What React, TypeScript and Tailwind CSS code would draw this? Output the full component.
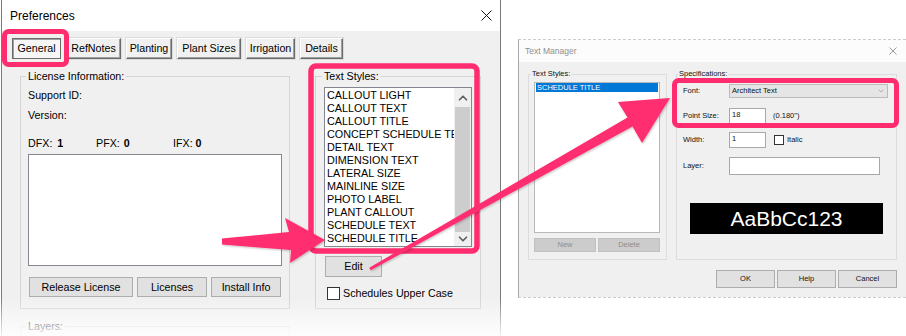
import React from 'react';
import { ChevronDown, ChevronUp } from 'lucide-react';

const textStyles = [
  'CALLOUT LIGHT',
  'CALLOUT TEXT',
  'CALLOUT TITLE',
  'CONCEPT SCHEDULE TEXT',
  'DETAIL TEXT',
  'DIMENSION TEXT',
  'LATERAL SIZE',
  'MAINLINE SIZE',
  'PHOTO LABEL',
  'PLANT CALLOUT',
  'SCHEDULE TEXT',
  'SCHEDULE TITLE',
];

const tabs = [
  { label: 'General', width: 'w-[49px]', active: true },
  { label: 'RefNotes', width: 'w-[55px]', active: false },
  { label: 'Planting', width: 'w-[46px]', active: false },
  { label: 'Plant Sizes', width: 'w-[64px]', active: false },
  { label: 'Irrigation', width: 'w-[49px]', active: false },
  { label: 'Details', width: 'w-[43px]', active: false },
];

const PINK = '#ff2d6f';

function CloseIcon({ size, color }: { size: number; color: string }) {
  return (
    <svg width={size} height={size} viewBox={`0 0 ${size} ${size}`}>
      <path
        d={`M0.5 0.5L${size - 0.5} ${size - 0.5}M${size - 0.5} 0.5L0.5 ${size - 0.5}`}
        stroke={color}
        strokeWidth={1}
      />
    </svg>
  );
}

function Preferences() {
  return (
    <div className="ml-px flex h-[336px] w-[500px] shrink-0 flex-col border-x border-[#7a7a7a] bg-[#f0f0f0] text-[10.7px] text-black">
      <div className="flex h-[31px] shrink-0 items-center justify-between bg-white px-[8px]">
        <span className="text-[12px]">Preferences</span>
        <CloseIcon size={11} color="#111" />
      </div>

      {/* tab buttons */}
      <div className="mt-[7px] flex gap-[5px] pl-[10px]">
        {tabs.map((tab) => (
          <div
            key={tab.label}
            className={
              tab.active
                ? `${tab.width} flex h-[21px] items-center justify-center border border-[#6a6a6a] bg-[#f6f6f6] shadow-[inset_1px_1px_0_#a0a0a0]`
                : `${tab.width} flex h-[21px] items-center justify-center border border-b-[#6a6a6a] border-l-white border-r-[#6a6a6a] border-t-white bg-[#f0f0f0] shadow-[inset_-1px_-1px_0_#a0a0a0,0_0_0_1px_#dcdcdc]`
            }
          >
            {tab.label}
          </div>
        ))}
      </div>

      <div className="mt-[17px] flex items-start">
        <div className="ml-[18px] flex flex-col">
          {/* License Information */}
          <div className="flex w-[270px] flex-col border border-[#d5d5d5]">
            <div className="-mt-[8px] ml-[5px] w-fit bg-[#f0f0f0] px-[2px] leading-[14px]">License Information:</div>
            <div className="ml-[7px] mt-[5px] leading-[14px]">Support ID:</div>
            <div className="ml-[7px] mt-[6px] leading-[14px]">Version:</div>
            <div className="ml-[7px] mt-[14px] flex leading-[14px]">
              <span className="flex w-[68px] gap-[5px]">
                DFX:<b>1</b>
              </span>
              <span className="flex w-[77px] gap-[4px]">
                PFX:<b>0</b>
              </span>
              <span className="flex gap-[3px]">
                IFX:<b>0</b>
              </span>
            </div>
            <div className="ml-[7px] mt-[4px] h-[112px] w-[254px] border border-[#828790] bg-white" />
            <div className="mb-[11px] ml-[8px] mt-[11px] flex gap-[4px]">
              <button type="button" className="h-[20px] w-[104px] border border-[#adadad] bg-[#e1e1e1]">
                Release License
              </button>
              <button type="button" className="h-[20px] w-[70px] border border-[#adadad] bg-[#e1e1e1]">
                Licenses
              </button>
              <button type="button" className="h-[20px] w-[70px] border border-[#adadad] bg-[#e1e1e1]">
                Install Info
              </button>
            </div>
          </div>

          {/* Layers (cut off) */}
          <div className="mt-[17px] h-[40px] w-[270px] border border-[#d5d5d5]">
            <div className="-mt-[8px] ml-[5px] w-fit bg-[#f0f0f0] px-[2px] leading-[14px]">Layers:</div>
          </div>
        </div>

        {/* Text Styles */}
        <div className="ml-[25px] flex w-[166px] flex-col border border-[#d5d5d5]">
          <div className="-mt-[8px] ml-[6px] w-fit bg-[#f0f0f0] px-[2px] leading-[14px]">Text Styles:</div>
          <div className="ml-[8px] mt-[4px] flex h-[160px] w-[148px] border border-[#828790] bg-white">
            <div className="min-w-0 flex-1 overflow-hidden pl-[2px] pt-[1px] text-[10.8px]">
              {textStyles.map((name) => (
                <div key={name} className="h-[13px] whitespace-nowrap leading-[13px]">
                  {name}
                </div>
              ))}
            </div>
            <div className="flex w-[17px] flex-col bg-[#f0f0f0]">
              <div className="flex h-[19px] items-center justify-center text-[#606060]">
                <ChevronUp size={14} strokeWidth={3} />
              </div>
              <div className="mx-px flex-1 bg-[#cdcdcd]" />
              <div className="flex h-[14px] items-center justify-center text-[#606060]">
                <ChevronDown size={14} strokeWidth={3} />
              </div>
            </div>
          </div>
          <button type="button" className="ml-[9px] mt-[9px] h-[21px] w-[57px] border border-[#adadad] bg-[#e1e1e1]">
            Edit
          </button>
          <div className="mb-[8px] ml-[11px] mt-[10px] flex items-center gap-[3px] leading-[13px]">
            <span className="h-[13px] w-[13px] border border-[#333] bg-white" />
            <span>Schedules Upper Case</span>
          </div>
        </div>
      </div>
    </div>
  );
}

function TextManager() {
  return (
    <div className="ml-[17px] mt-[39px] flex h-[259px] w-[388px] shrink-0 flex-col border-y border-l border-dashed border-[#cccccc] border-l-[#a8a8a8] text-[7.5px] text-[#111] [border-left-style:solid]">
      <div className="flex h-[22px] shrink-0 items-center justify-between bg-[#fcfcfc] pl-[6px] pr-[9px]">
        <span className="text-[8.5px] text-[#8f8f8f]">Text Manager</span>
        <CloseIcon size={8} color="#9a9a9a" />
      </div>

      <div className="flex flex-1 flex-col bg-[#f0f0f0]">
        <div className="ml-[9px] mt-[12px] flex gap-[9px]">
          {/* Text Styles */}
          <div className="flex h-[186px] w-[139px] flex-col border border-[#dcdcdc]">
            <div className="-mt-[6px] ml-[2px] w-fit bg-[#f0f0f0] px-px leading-[10px]">Text Styles:</div>
            <div className="ml-[5px] mt-[3px] h-[151px] w-[126px] border border-[#b8b8b8] bg-white px-px">
              <div className="h-[9px] bg-[#0078d7] pl-[1px] leading-[9px] text-white">SCHEDULE TITLE</div>
            </div>
            <div className="ml-[5px] mt-[5px] flex gap-[2px]">
              <div className="flex h-[14px] w-[62px] items-center justify-center border border-[#c0c0c0] bg-[#cccccc] text-[#8c8c8c]">
                New
              </div>
              <div className="flex h-[14px] w-[62px] items-center justify-center border border-[#c0c0c0] bg-[#cccccc] text-[#8c8c8c]">
                Delete
              </div>
            </div>
          </div>

          {/* Specifications */}
          <div className="flex h-[186px] w-[221px] flex-col border border-[#dcdcdc]">
            <div className="-mt-[6px] ml-px w-fit bg-[#f0f0f0] px-px leading-[10px]">Specifications:</div>
            <div className="ml-[6px] mt-[5px] flex h-[14px] items-center">
              <span className="w-[46px]">Font:</span>
              <div className="flex h-[14px] w-[159px] items-center justify-between border border-[#bcbcbc] bg-[#e5e5e5] pl-[2px] pr-[2px]">
                <span>Architect Text</span>
                <ChevronDown size={8} strokeWidth={1.5} color="#777" />
              </div>
            </div>
            <div className="ml-[6px] mt-[10px] flex h-[16px] items-center">
              <span className="w-[46px]">Point Size:</span>
              <div className="h-[16px] w-[37px] border border-[#a8a8a8] bg-white pl-[2px] pt-[1px] leading-[9px]">18</div>
              <span className="ml-[7px]">(0.180&quot;)</span>
            </div>
            <div className="ml-[6px] mt-[8px] flex h-[16px] items-center">
              <span className="w-[46px]">Width:</span>
              <div className="h-[16px] w-[37px] border border-[#a8a8a8] bg-white pl-[2px] pt-[1px] leading-[9px]">1</div>
              <span className="ml-[8px] h-[10px] w-[10px] border border-[#333] bg-white" />
              <span className="ml-[3px]">Italic</span>
            </div>
            <div className="ml-[6px] mt-[9px] flex h-[18px] items-center">
              <span className="w-[46px]">Layer:</span>
              <div className="h-[18px] w-[151px] border border-[#a8a8a8] bg-white" />
            </div>
            <div className="ml-[13px] mt-[28px] flex h-[31px] w-[193px] items-center justify-center bg-black text-[21px] text-white">
              AaBbCc123
            </div>
          </div>
        </div>

        <div className="mt-[10px] flex justify-end gap-[2px] pr-[9px]">
          <div className="flex h-[18px] w-[59px] items-center justify-center border border-[#adadad] bg-[#e1e1e1]">OK</div>
          <div className="flex h-[18px] w-[59px] items-center justify-center border border-[#adadad] bg-[#e1e1e1]">Help</div>
          <div className="flex h-[18px] w-[59px] items-center justify-center border border-[#adadad] bg-[#e1e1e1]">Cancel</div>
        </div>
      </div>
    </div>
  );
}

function Annotations() {
  return (
    <svg className="pointer-events-none absolute left-0 top-0" width={906} height={336} viewBox="0 0 906 336">
      <defs>
        <filter id="arrowShadow" x="-10%" y="-10%" width="120%" height="120%">
          <feDropShadow dx="1" dy="1" stdDeviation="1" floodColor="#000" floodOpacity="0.25" />
        </filter>
      </defs>
      <rect x={4.5} y={31.5} width={62} height={33} rx={4} fill="none" stroke={PINK} strokeWidth={5} />
      <rect x={311} y={66} width={166} height={185} rx={5} fill="none" stroke={PINK} strokeWidth={5.5} />
      <rect x={674.5} y={80.5} width={222} height={45} rx={4} fill="none" stroke={PINK} strokeWidth={5} />
      <g filter="url(#arrowShadow)" fill={PINK}>
        <polygon points="222,238.5 289,232 285,218 325,240 290,263 291,250 222,244.5" />
        <polygon points="369.3,267.7 627.5,117.6 618,102 670,98 642,143 632.5,126.4 370.7,270.3" />
      </g>
    </svg>
  );
}

export default function App() {
  return (
    <div className="relative flex h-[336px] w-[906px] overflow-hidden bg-white font-['Liberation_Sans',Arial,sans-serif]">
      <Preferences />
      <TextManager />
      {/* bottom of the Preferences window fades out */}
      <div className="pointer-events-none absolute left-0 top-[298px] h-[38px] w-[502px] bg-linear-to-b from-white/0 to-white/90" />
      <Annotations />
    </div>
  );
}
